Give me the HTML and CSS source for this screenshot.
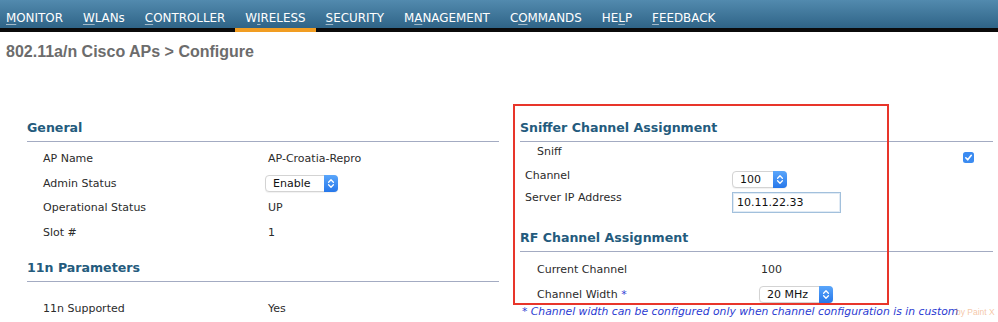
FILE: index.html
```html
<!DOCTYPE html>
<html>
<head>
<meta charset="utf-8">
<link rel="stylesheet" href="styles.css">
</head>
<body>
<nav class="topnav">
  <a class="nav-item"><u>M</u>ONITOR</a>
  <a class="nav-item"><u>W</u>LANs</a>
  <a class="nav-item"><u>C</u>ONTROLLER</a>
  <a class="nav-item active">W<u>I</u>RELESS</a>
  <a class="nav-item"><u>S</u>ECURITY</a>
  <a class="nav-item">M<u>A</u>NAGEMENT</a>
  <a class="nav-item">C<u>O</u>MMANDS</a>
  <a class="nav-item">HE<u>L</u>P</a>
  <a class="nav-item"><u>F</u>EEDBACK</a>
</nav>

<h1 class="page-title">802.11a/n Cisco APs &gt; Configure</h1>

<div class="content">
  <div class="col">
    <section>
      <h2 class="section-head">General</h2>
      <div class="rows">
        <div class="kv-row"><span>AP Name</span><span>AP-Croatia-Repro</span></div>
        <div class="kv-row"><span>Admin Status</span>
          <span class="select select-enable"><span class="select-text">Enable</span><span class="select-btn"><svg width="8" height="11" viewBox="0 0 8 11"><path d="M1.6 4.2 L4 1.8 L6.4 4.2 M1.6 6.8 L4 9.2 L6.4 6.8" fill="none" stroke="#fff" stroke-width="1.3" stroke-linecap="round" stroke-linejoin="round"/></svg></span></span>
        </div>
        <div class="kv-row"><span>Operational Status</span><span>UP</span></div>
        <div class="kv-row"><span>Slot #</span><span>1</span></div>
      </div>
    </section>
    <section class="section-11n">
      <h2 class="section-head">11n Parameters</h2>
      <div class="rows rows-11n">
        <div class="kv-row"><span>11n Supported</span><span>Yes</span></div>
      </div>
    </section>
  </div>

  <div class="col">
    <section>
      <h2 class="section-head">Sniffer Channel Assignment</h2>
      <div class="sniff-row"><span class="lbl">Sniff</span>
        <span class="checkbox"><svg width="11" height="11" viewBox="0 0 11 11"><rect x="0" y="0" width="11" height="11" rx="2.5" fill="#3b8bf1"/><path d="M2.8 5.8 L4.7 7.8 L8.3 3.3" fill="none" stroke="#fff" stroke-width="1.6" stroke-linecap="round" stroke-linejoin="round"/></svg></span>
      </div>
      <div class="field-row channel-row"><span class="lbl">Channel</span>
        <span class="select select-channel"><span class="select-text">100</span><span class="select-btn"><svg width="8" height="11" viewBox="0 0 8 11"><path d="M1.6 4.2 L4 1.8 L6.4 4.2 M1.6 6.8 L4 9.2 L6.4 6.8" fill="none" stroke="#fff" stroke-width="1.3" stroke-linecap="round" stroke-linejoin="round"/></svg></span></span>
      </div>
      <div class="field-row server-row"><span class="lbl">Server IP Address</span>
        <span class="text-input">10.11.22.33</span>
      </div>
    </section>
    <section class="section-rf">
      <h2 class="section-head">RF Channel Assignment</h2>
      <div class="rows rows-rf">
        <div class="kv-row rf-row"><span>Current Channel</span><span>100</span></div>
        <div class="kv-row rf-row"><span>Channel Width <span class="req">*</span></span>
          <span class="select select-width"><span class="select-text">20 MHz</span><span class="select-btn"><svg width="8" height="11" viewBox="0 0 8 11"><path d="M1.6 4.2 L4 1.8 L6.4 4.2 M1.6 6.8 L4 9.2 L6.4 6.8" fill="none" stroke="#fff" stroke-width="1.3" stroke-linecap="round" stroke-linejoin="round"/></svg></span></span>
        </div>
      </div>
      <p class="footnote">* Channel width can be configured only when channel configuration is in custom</p>
    </section>
  </div>

  <div class="red-box"></div>
  <div class="watermark">by Paint X</div>
</div>
</body>
</html>
```

FILE: styles.css
```css
html, body {
  margin: 0;
  padding: 0;
  background: #ffffff;
}

body {
  font-family: "DejaVu Sans", Verdana, sans-serif;
  font-size: 11px;
  color: #2b2b2b;
  width: 998px;
  height: 322px;
  overflow: hidden;
}

/* ---------- top navigation ---------- */
.topnav {
  display: flex;
  height: 28px;
  background: linear-gradient(#528aae, #2f6487);
  border-bottom: 4px solid #0b0b0b;
  box-sizing: content-box;
}

.nav-item {
  display: block;
  padding: 8px 10px 0 10px;
  height: 20px;
  line-height: 20px;
  font-size: 11.9px;
  color: #ffffff;
  text-decoration: none;
  white-space: nowrap;
}

.nav-item:first-child {
  padding-left: 6px;
}

.nav-item u {
  text-decoration: underline;
  text-decoration-color: rgba(255, 255, 255, 0.55);
  text-underline-offset: 2px;
}

.nav-item.active {
  border-bottom: 4px solid #f19d22;
  margin-bottom: -4px;
}

/* ---------- title ---------- */
.page-title {
  margin: 11px 0 0 0;
  padding-left: 6px;
  font-family: "Liberation Sans", Arial, sans-serif;
  font-weight: bold;
  font-size: 16px;
  line-height: 18px;
  color: #6c6c6c;
}

/* ---------- content ---------- */
.content {
  position: relative;
  display: grid;
  grid-template-columns: 472px 473px;
  column-gap: 21px;
  padding-left: 27px;
  margin-top: 59px;
}

.section-head {
  margin: 0;
  font-family: "DejaVu Sans", Verdana, sans-serif;
  font-weight: bold;
  font-size: 12.6px;
  line-height: 16px;
  padding-bottom: 5px;
  color: #245b7d;
  border-bottom: 1px solid #a3abc2;
}

.rows {
  padding-top: 4px;
}

.kv-row {
  display: grid;
  grid-template-columns: 225px 1fr;
  padding-left: 16px;
  height: 24.7px;
  align-items: center;
  white-space: nowrap;
}

.section-11n {
  margin-top: 15px;
}

.rows-11n {
  padding-top: 14px;
}

/* ---------- select ---------- */
.select {
  display: flex;
  align-items: stretch;
  height: 17px;
  box-sizing: border-box;
  border: 1px solid #d3d3d3;
  border-radius: 4px;
  background: #ffffff;
  box-shadow: 0 1px 1px rgba(0, 0, 0, 0.06);
  justify-self: start;
  margin-left: -3px;
}

.select-text {
  flex: 1;
  padding-left: 7px;
  line-height: 15px;
  color: #111;
}

.select-btn {
  width: 14px;
  margin: -1px -1px -1px 0;
  border-radius: 0 4px 4px 0;
  background: linear-gradient(#5aa6fb, #2677ea);
  display: flex;
  align-items: center;
  justify-content: center;
}

.select-enable { width: 73px; }
.select-channel { width: 55px; margin-left: 0; }
.select-width { width: 74px; margin-left: -2px; }

/* ---------- right column ---------- */
.sniff-row {
  display: grid;
  grid-template-columns: 426px auto;
  padding-left: 17px;
  margin-top: 2px;
  height: 24px;
  align-items: start;
}

.lbl {
  line-height: 16px;
}

.checkbox {
  display: block;
  width: 11px;
  height: 11px;
  margin-top: 7.5px;
}

.checkbox svg {
  display: block;
}

.field-row {
  display: grid;
  grid-template-columns: 207px auto;
  padding-left: 5px;
  align-items: start;
}

.channel-row {
  height: 22px;
}

.channel-row .select {
  margin-top: 3px;
}

.server-row {
  height: 24px;
}

.text-input {
  display: block;
  width: 109px;
  height: 21px;
  box-sizing: border-box;
  margin-top: 2px;
  border: 1px solid #a2c0dc;
  box-shadow: inset 0 0 0 1px #e1ebf5;
  padding-left: 4px;
  line-height: 19px;
  color: #111;
}

.section-rf {
  margin-top: 16px;
}

.rows-rf {
  padding-top: 5px;
}

.rf-row {
  padding-left: 17px;
  grid-template-columns: 224px 1fr;
}

.req {
  color: #3344d6;
}

.footnote {
  margin: 0;
  padding-left: 2px;
  font-style: italic;
  font-size: 10.8px;
  line-height: 12px;
  color: #2b3bd2;
  white-space: nowrap;
}

/* ---------- annotation overlays ---------- */
.red-box {
  position: absolute;
  left: 513px;
  top: -16px;
  width: 376px;
  height: 201px;
  box-sizing: border-box;
  border: 2px solid #e8352a;
  pointer-events: none;
}

.watermark {
  position: absolute;
  left: 956px;
  top: 187px;
  font-family: "Liberation Sans", Arial, sans-serif;
  font-size: 8.5px;
  color: rgba(236, 150, 90, 0.55);
  white-space: nowrap;
}
```
